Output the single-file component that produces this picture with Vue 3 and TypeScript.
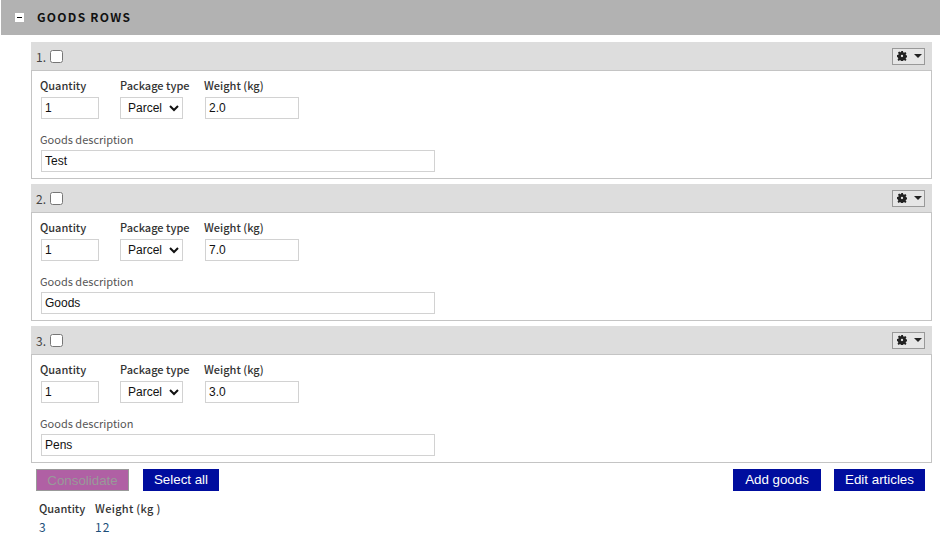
<script setup lang="ts">
interface GoodsRow {
  quantity: string
  packageType: string
  weight: string
  description: string
}

const rows: GoodsRow[] = [
  { quantity: '1', packageType: 'Parcel', weight: '2.0', description: 'Test' },
  { quantity: '1', packageType: 'Parcel', weight: '7.0', description: 'Goods' },
  { quantity: '1', packageType: 'Parcel', weight: '3.0', description: 'Pens' }
]
</script>

<template>
  <div class="page">
    <div class="section-head">
      <span class="toggle"><span class="toggle-bar"></span></span>
      <h2>GOODS ROWS</h2>
    </div>

    <div class="rows">
      <div v-for="(row, index) in rows" :key="index" class="row">
        <div class="row-head">
          <div class="row-title">
            <span class="row-num">{{ index + 1 }}.</span>
            <input type="checkbox" class="check" />
          </div>
          <button class="gear-btn" type="button">
            <svg width="10" height="10" viewBox="0 0 12 12">
              <path
                fill="#222"
                fill-rule="evenodd"
                d="M4.900 0h2.200l.3 1.600 1.100.5L9.900 1.100l1.500 1.500-1 1.400.5 1.100 1.600.3v2.200l-1.600.3-.5 1.100 1 1.400-1.500 1.500-1.400-1-1.100.5-.3 1.600H4.900l-.3-1.600-1.100-.5-1.400 1-1.500-1.500 1-1.400-.5-1.100L0 7.100V4.900l1.600-.3.5-1.100-1-1.400 1.500-1.500 1.400 1 1.100-.5zM6 4.600a1.400 1.400 0 1 0 0 2.800 1.400 1.400 0 0 0 0-2.800z"
              />
            </svg>
            <span class="caret"></span>
          </button>
        </div>
        <div class="row-body">
          <div class="fields">
            <label class="field qty">
              <span class="label strong">Quantity</span>
              <input class="input qty-input" type="text" :value="row.quantity" />
            </label>
            <label class="field pkg">
              <span class="label strong">Package type</span>
              <select class="select">
                <option>{{ row.packageType }}</option>
              </select>
            </label>
            <label class="field">
              <span class="label strong">Weight (kg)</span>
              <input class="input weight-input" type="text" :value="row.weight" />
            </label>
          </div>
          <label class="field desc">
            <span class="label desc-label">Goods description</span>
            <input class="input desc-input" type="text" :value="row.description" />
          </label>
        </div>
      </div>
    </div>

    <div class="actions">
      <div class="action-group">
        <button class="btn disabled" type="button" disabled>Consolidate</button>
        <button class="btn select-all" type="button">Select all</button>
      </div>
      <div class="action-group">
        <button class="btn add-goods" type="button">Add goods</button>
        <button class="btn edit-articles" type="button">Edit articles</button>
      </div>
    </div>

    <div class="totals">
      <div class="total qty-total">
        <span class="label strong">Quantity</span>
        <span class="value">3</span>
      </div>
      <div class="total">
        <span class="label strong wide">Weight (kg )</span>
        <span class="value">12</span>
      </div>
    </div>
  </div>
</template>

<style>
html,
body {
  margin: 0;
  background: #fff;
}
</style>

<style scoped>
.page {
  width: 940px;
  height: 548px;
  overflow: hidden;
  padding-left: 1px;
  box-sizing: border-box;
  font-family: "Liberation Sans", Arial, sans-serif;
  font-size: 12px;
  color: #222;
}

.section-head {
  display: flex;
  align-items: center;
  height: 35px;
  background: #b2b2b2;
  padding-left: 14px;
}

.toggle {
  display: flex;
  align-items: center;
  justify-content: center;
  width: 9px;
  height: 9px;
  background: #fff;
}

.toggle-bar {
  width: 5px;
  height: 1px;
  background: #111;
}

h2 {
  margin: -2px 0 0 13px;
  font-family: "Noto Sans CJK JP", "Liberation Sans", sans-serif;
  font-size: 12px;
  font-weight: 700;
  letter-spacing: 1.25px;
  color: #111;
}

.rows {
  display: flex;
  flex-direction: column;
  gap: 5px;
  margin: 7px 8px 0 30px;
}

.row-head {
  display: flex;
  align-items: center;
  justify-content: space-between;
  height: 28px;
  background: #ddd;
  padding: 0 7px 0 5px;
}

.row-title {
  display: flex;
  align-items: center;
  gap: 4px;
}

.row-num {
  font-family: "Noto Sans CJK JP", "Liberation Sans", sans-serif;
  font-size: 12px;
  color: #444;
}

.check {
  width: 13px;
  height: 13px;
  margin: 1px 0 0;
}

.gear-btn {
  display: flex;
  align-items: center;
  gap: 7px;
  width: 33px;
  height: 17px;
  padding: 0 0 0 4px;
  box-sizing: border-box;
  background: #e6e6e6;
  border: 1px solid #999;
  border-radius: 0;
}

.caret {
  width: 0;
  height: 0;
  border-left: 4px solid transparent;
  border-right: 4px solid transparent;
  border-top: 4px solid #222;
}

.row-body {
  height: 109px;
  box-sizing: border-box;
  border: 1px solid #c4c4c4;
  padding: 7px 0 0 8px;
}

.fields {
  display: flex;
}

.field {
  display: flex;
  flex-direction: column;
}

.qty {
  width: 80px;
}

.pkg {
  width: 84px;
}

.label {
  height: 18px;
  line-height: 14px;
  font-family: "Noto Sans CJK JP", "Liberation Sans", sans-serif;
  font-size: 11px;
  color: #555;
  white-space: nowrap;
}

.strong {
  font-weight: 500;
  color: #333;
}

.wide {
  letter-spacing: 0.3px;
}

.desc-label {
  height: 17px;
}

.input {
  height: 22px;
  box-sizing: border-box;
  border: 1px solid #d2d2d2;
  border-radius: 0;
  padding: 0 3px;
  outline: none;
  font-family: "Liberation Sans", Arial, sans-serif;
  font-size: 12px;
  color: #111;
  background: #fff;
}

.qty-input {
  width: 58px;
  margin: 1px 0 0 1px;
}

.select {
  width: 63px;
  height: 22px;
  margin-top: 1px;
  box-sizing: border-box;
  border: 1px solid #d2d2d2;
  border-radius: 0;
  padding: 0 0 0 3px;
  font-family: "Liberation Sans", Arial, sans-serif;
  font-size: 12px;
  color: #111;
  background: #fff;
}

.weight-input {
  width: 94px;
  margin: 1px 0 0 1px;
}

.desc {
  margin-top: 13px;
}

.desc-input {
  width: 394px;
  margin: 1px 0 0 1px;
}

.actions {
  display: flex;
  justify-content: space-between;
  margin: 6px 15px 0 35px;
}

.action-group {
  display: flex;
  gap: 13px;
}

.action-group:first-child {
  gap: 14px;
}

.btn {
  height: 22px;
  box-sizing: border-box;
  padding: 0;
  border: 0;
  border-radius: 0;
  background: #000d9e;
  color: #fff;
  font-family: "Liberation Sans", Arial, sans-serif;
  font-size: 13.33px;
  line-height: 22px;
}

.select-all {
  width: 76px;
}

.add-goods {
  width: 88px;
}

.edit-articles {
  width: 91px;
}

.disabled {
  width: 93px;
  border: 1px solid #999;
  background: #b060a4;
  color: #999;
}

.totals {
  display: flex;
  margin: 10px 0 0 38px;
}

.total {
  display: flex;
  flex-direction: column;
}

.total .label {
  height: 16px;
}

.qty-total {
  width: 56px;
}

.value {
  margin-top: 1px;
  font-family: "Noto Sans CJK JP", "Liberation Sans", sans-serif;
  font-size: 12px;
  letter-spacing: 1px;
  line-height: 18px;
  color: #1d4f7a;
}
</style>
